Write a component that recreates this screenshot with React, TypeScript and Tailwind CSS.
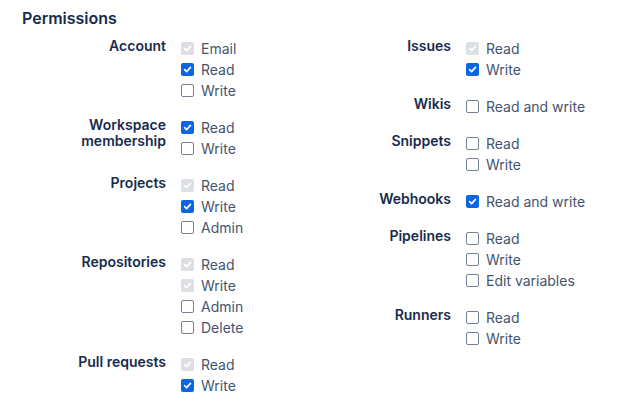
import React from 'react';

type State = 'on' | 'off' | 'locked';

interface Group {
  label: string[];
  options: [string, State][];
}

const LEFT: Group[] = [
  { label: ['Account'], options: [['Email', 'locked'], ['Read', 'on'], ['Write', 'off']] },
  { label: ['Workspace', 'membership'], options: [['Read', 'on'], ['Write', 'off']] },
  { label: ['Projects'], options: [['Read', 'locked'], ['Write', 'on'], ['Admin', 'off']] },
  { label: ['Repositories'], options: [['Read', 'locked'], ['Write', 'locked'], ['Admin', 'off'], ['Delete', 'off']] },
  { label: ['Pull requests'], options: [['Read', 'locked'], ['Write', 'on']] },
];

const RIGHT: Group[] = [
  { label: ['Issues'], options: [['Read', 'locked'], ['Write', 'on']] },
  { label: ['Wikis'], options: [['Read and write', 'off']] },
  { label: ['Snippets'], options: [['Read', 'off'], ['Write', 'off']] },
  { label: ['Webhooks'], options: [['Read and write', 'on']] },
  { label: ['Pipelines'], options: [['Read', 'off'], ['Write', 'off'], ['Edit variables', 'off']] },
  { label: ['Runners'], options: [['Read', 'off'], ['Write', 'off']] },
];

const Check = ({ state }: { state: State }) => {
  if (state === 'off') {
    return <span className="w-[13px] h-[13px] rounded-[2px] border-[1.5px] border-[#758195] bg-white flex-shrink-0" />;
  }
  return (
    <span
      className={`w-[13px] h-[13px] rounded-[2px] flex items-center justify-center flex-shrink-0 ${
        state === 'on' ? 'bg-[#0c66e4]' : 'bg-[#dcdfe4]'
      }`}
    >
      <svg width="9" height="9" viewBox="0 0 10 10" fill="none">
        <path d="M1.8 5.2 L4 7.4 L8.3 2.6" stroke="white" strokeWidth="1.8" strokeLinecap="round" strokeLinejoin="round" />
      </svg>
    </span>
  );
};

const Column = ({ groups, labelWidth }: { groups: Group[]; labelWidth: string }) => (
  <div className="flex flex-col gap-4">
    {groups.map((g) => (
      <div key={g.label.join(' ')} className="flex gap-[15px]">
        <div className={`${labelWidth} text-right text-[14px] leading-4 font-semibold text-[#172b4d]`}>
          {g.label.map((l) => (
            <div key={l}>{l}</div>
          ))}
        </div>
        <div className="flex flex-col">
          {g.options.map(([name, state]) => (
            <label key={name} className="flex items-center gap-[7px] h-[21px] text-[14px] text-[#44546f]">
              <Check state={state} />
              <span>{name}</span>
            </label>
          ))}
        </div>
      </div>
    ))}
  </div>
);

export default function App() {
  return (
    <div className="w-[634px] h-[407px] bg-white pl-[22px] pt-[6px] overflow-hidden" style={{ fontFamily: 'Inter, "Noto Sans", sans-serif' }}>
      <h2 className="text-[16px] leading-6 font-semibold text-[#172b4d]">Permissions</h2>
      <div className="flex mt-[8px]">
        <div className="w-[300px]">
          <Column groups={LEFT} labelWidth="w-[144px]" />
        </div>
        <Column groups={RIGHT} labelWidth="w-[129px]" />
      </div>
    </div>
  );
}
